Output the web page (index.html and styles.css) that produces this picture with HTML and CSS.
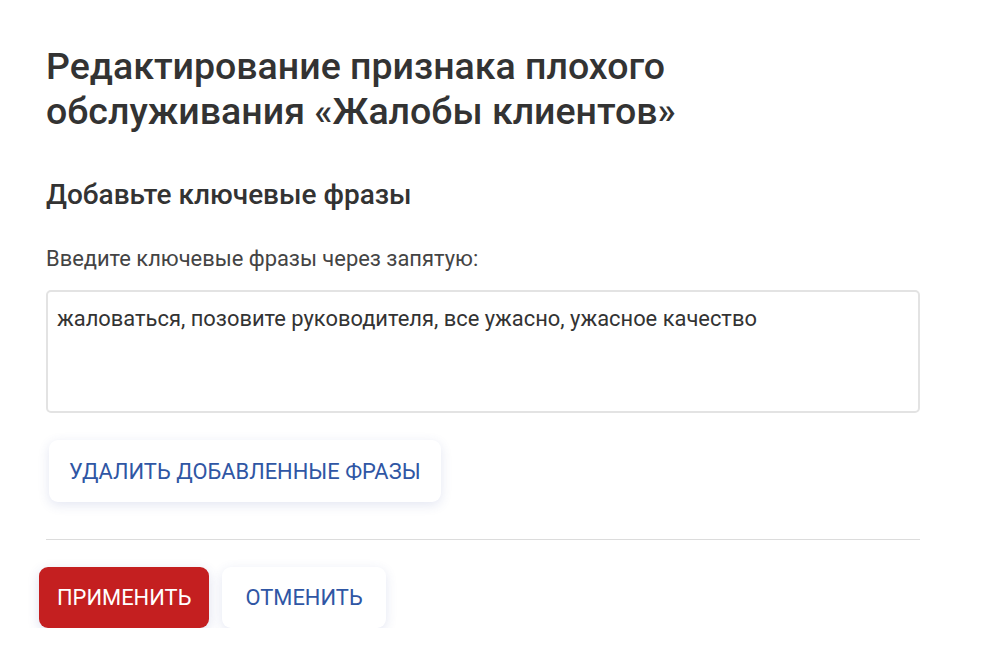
FILE: index.html
```html
<!DOCTYPE html>
<html lang="ru">
<head>
<meta charset="utf-8">
<title>Редактирование признака</title>
<link rel="stylesheet" href="styles.css">
</head>
<body>
<main class="page">
  <h1 class="title">Редактирование признака плохого обслуживания «Жалобы клиентов»</h1>
  <h2 class="subtitle">Добавьте ключевые фразы</h2>
  <label class="label" for="phrases">Введите ключевые фразы через запятую:</label>
  <div class="field" id="phrases">жаловаться, позовите руководителя, все ужасно, ужасное качество</div>
  <div class="delete-row">
    <button class="btn btn-light btn-delete">Удалить добавленные фразы</button>
  </div>
  <hr class="divider">
  <div class="actions">
    <button class="btn btn-primary">Применить</button>
    <button class="btn btn-light btn-cancel">Отменить</button>
  </div>
</main>
</body>
</html>
```

FILE: styles.css
```css
html, body {
  margin: 0;
  padding: 0;
  background: #ffffff;
}
body {
  font-family: Roboto, "Liberation Sans", sans-serif;
  color: #333333;
}
.page {
  width: 874px;
  padding: 44px 0 0 46px;
  display: flex;
  flex-direction: column;
}
.title {
  margin: 0;
  font-size: 37.5px;
  line-height: 45px;
  font-weight: 500;
  color: #333333;
  width: 700px;
}
.subtitle {
  margin: 44px 0 0;
  font-size: 28px;
  line-height: 34px;
  font-weight: 500;
  color: #333333;
}
.label {
  margin-top: 34px;
  font-size: 21.9px;
  line-height: 26px;
  color: #444444;
}
.field {
  margin-top: 18px;
  height: 123px;
  box-sizing: border-box;
  border: 2px solid #e3e3e3;
  border-radius: 5px;
  padding: 14px 9px;
  font-size: 21.9px;
  line-height: 26px;
  color: #333333;
}
.delete-row {
  margin-top: 27px;
  display: flex;
}
.btn {
  font-family: Roboto, "Liberation Sans", sans-serif;
  font-size: 21.9px;
  text-transform: uppercase;
  border: none;
  height: 62px;
  padding: 0 20px;
  border-radius: 9px;
  cursor: pointer;
}
.btn-light {
  background: #ffffff;
  color: #2f56a4;
  box-shadow: 0 3px 12px rgba(60, 80, 160, 0.14);
}
.btn-delete {
  margin-left: 3px;
  padding: 0 20px;
}
.btn-primary {
  background: #c41f20;
  color: #ffffff;
  box-shadow: 0 3px 12px rgba(60, 80, 160, 0.18);
}
.divider {
  margin: 37px 0 0;
  border: none;
  border-top: 1px solid #dcdcdc;
  height: 0;
}
.actions {
  margin: 27px 0 0 -7px;
  display: flex;
  gap: 13px;
}
.actions .btn {
  height: 61px;
  padding: 0 18px;
}
.actions .btn-cancel {
  padding: 0 23px;
}
```
